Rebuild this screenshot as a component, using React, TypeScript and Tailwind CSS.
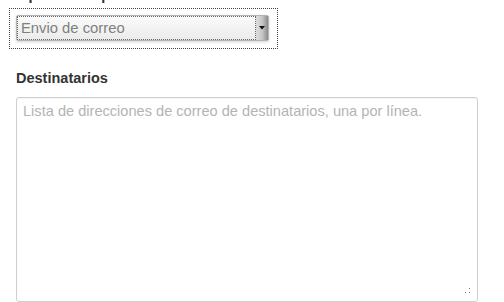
import React from "react";

export default function App() {
  return (
    <div className="w-[504px] h-[302px] overflow-hidden bg-white pl-[9px] font-['Liberation_Sans',Arial,Helvetica,sans-serif]">
      <label className="block -mt-[15px] ml-[7px] leading-[20px] text-[14.5px] font-bold text-[#333]">
        Tipo de componente
      </label>
      <div className="mt-[3px] w-[269px] h-[41px] border border-dotted border-[#444] pt-[6px] pl-[6px]">
        <div className="flex w-[253px] h-[26px] rounded-[2px] border border-[#b5b5b5] bg-gradient-to-b from-[#fbfbfb] to-[#ebebeb] shadow-[0_1px_3px_rgba(0,0,0,0.18)]">
          <div className="flex-1 flex items-center border border-dotted border-[#666] pl-[3px] text-[14.8px] text-[#808080] leading-none">
            Envio de correo
          </div>
          <div className="w-[12px] flex items-center justify-center bg-gradient-to-r from-[#dcdcdc] via-[#c4c4c4] to-[#8a8a8a] border-l border-[#d8d8d8]">
            <svg width="6" height="4" viewBox="0 0 6 4" className="-ml-[2px]">
              <polygon points="0,0 6,0 3,3.5" fill="#111" />
            </svg>
          </div>
        </div>
      </div>
      <label className="block mt-[19px] ml-[7px] leading-[20px] text-[14.5px] font-bold text-[#333]">
        Destinatarios
      </label>
      <div className="relative mt-[9px] ml-[7px] w-[462px] h-[205px]">
        <textarea
          className="block w-full h-full resize-none rounded-[3px] border border-[#cfcfcf] bg-white px-[6px] pt-[3px] text-[14.6px] leading-[20px] text-[#333] outline-none shadow-[inset_0_1px_1px_rgba(0,0,0,0.04)] placeholder:text-[#b4b4b4] font-['Liberation_Sans',Arial,Helvetica,sans-serif]"
          placeholder="Lista de direcciones de correo de destinatarios, una por línea."
        />
        <div className="absolute right-[8px] bottom-[9px] w-[5px] h-[5px]">
          <span className="absolute left-0 bottom-0 w-[1px] h-[1px] bg-[#777]" />
          <span className="absolute right-0 bottom-0 w-[1px] h-[1px] bg-[#777]" />
          <span className="absolute right-0 top-0 w-[1px] h-[1px] bg-[#777]" />
        </div>
      </div>
    </div>
  );
}
